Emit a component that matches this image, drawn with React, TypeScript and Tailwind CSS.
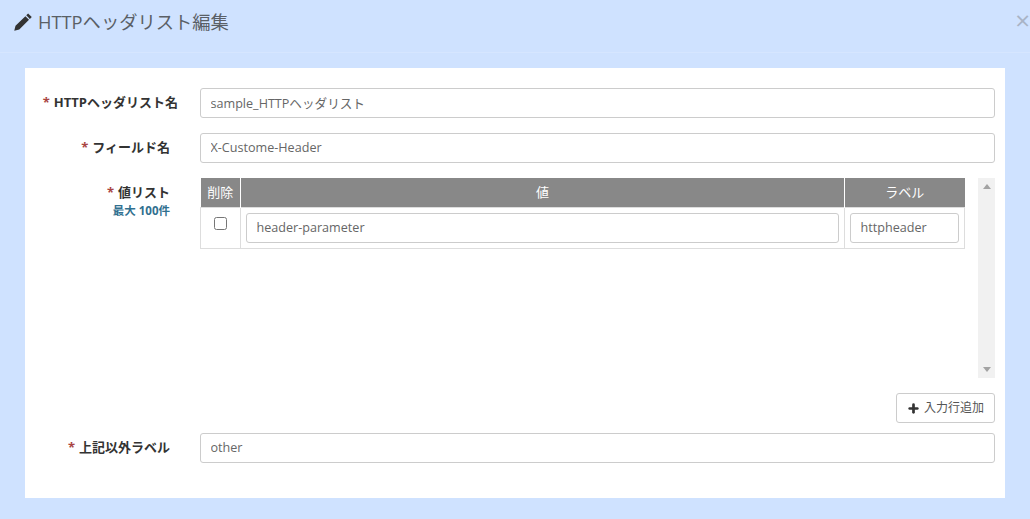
import { Plus } from "lucide-react";

const font = "font-['Open_Sans','Noto_Sans_CJK_JP',sans-serif]";

function FieldLabel({ children, className = "w-[145px]" }: { children: React.ReactNode; className?: string }) {
  return (
    <div className={`${className} shrink-0 pb-[2px] text-right text-[13px] leading-[18px] font-bold whitespace-nowrap text-[#333]`}>
      <span className="mr-[4px] text-[#a94442]">*</span>
      {children}
    </div>
  );
}

function TextBox({ value, className = "" }: { value: string; className?: string }) {
  return (
    <input
      readOnly
      value={value}
      className={`h-[30px] rounded-[3px] border border-[#ccc] bg-white pr-[10px] pl-[9.5px] text-[12.6px] text-[#666] outline-none ${className}`}
    />
  );
}

function App() {
  return (
    <div className={`${font} flex h-[519px] w-[1030px] flex-col overflow-hidden bg-[#cfe2ff]`}>
      <header className="flex h-[53px] shrink-0 items-start justify-between border-b border-[#d6e6ff] pt-[9px] pl-[13px]">
        <div className="flex items-center gap-[5px] text-[18.3px] leading-[25px] text-[#5a5f66]">
          <svg width="20" height="20" viewBox="0 0 16 16" className="fill-[#333]">
            <path d="M12.1 1.1 15 4l-1.5 1.5-2.9-2.9zM9.9 3.3l2.9 2.9L5 14l-4 1 1-4z" />
          </svg>
          <span>HTTPヘッダリスト編集</span>
        </div>
        <span className="text-[26px] leading-[22px] text-[#a9b4c6]">×</span>
      </header>

      <main className="mx-[25px] mt-[15px] flex h-[430px] flex-col bg-white pt-[20px] pr-[10px]">
        <div className="flex items-center gap-[22px]">
          <FieldLabel className="w-[153px]">HTTPヘッダリスト名</FieldLabel>
          <TextBox value="sample_HTTPヘッダリスト" className="flex-1 pb-[2px]" />
        </div>

        <div className="mt-[15px] flex items-center gap-[30px]">
          <FieldLabel>フィールド名</FieldLabel>
          <TextBox value="X-Custome-Header" className="flex-1 pb-[2px]" />
        </div>

        <div className="mt-[15px] flex gap-[30px]">
          <div className="w-[145px] shrink-0 text-right">
            <div className="pt-[5px]">
              <FieldLabel>値リスト</FieldLabel>
            </div>
            <div className="text-[11.5px] leading-[16px] font-bold text-[#31708f]">最大 100件</div>
          </div>

          <div className="flex h-[200px] flex-1 justify-between">
            <table className="h-fit w-[765px] table-fixed border-collapse text-[13px]">
              <thead>
                <tr className="h-[29px] bg-[#888] text-white">
                  <th className="w-[40px] border-r border-white font-normal">削除</th>
                  <th className="border-r border-white font-normal">値</th>
                  <th className="w-[120px] font-normal">ラベル</th>
                </tr>
              </thead>
              <tbody>
                <tr className="h-[41px]">
                  <td className="border border-[#ddd] text-center">
                    <input type="checkbox" className="h-[13px] w-[13px] align-[2px]" readOnly />
                  </td>
                  <td className="border border-[#ddd] px-[5px]">
                    <TextBox value="header-parameter" className="block w-full" />
                  </td>
                  <td className="border border-[#ddd] px-[5px]">
                    <TextBox value="httpheader" className="block w-full" />
                  </td>
                </tr>
              </tbody>
            </table>

            <div className="flex w-[17px] flex-col items-center justify-between bg-[#f1f1f1] py-[6px]">
              <div className="h-0 w-0 border-x-[4px] border-b-[5px] border-x-transparent border-b-[#a3a3a3]" />
              <div className="h-0 w-0 border-x-[4px] border-t-[5px] border-x-transparent border-t-[#a3a3a3]" />
            </div>
          </div>
        </div>

        <div className="mt-[15px] flex justify-end">
          <button className="flex h-[30px] items-center gap-[4px] rounded-[3px] border border-[#ccc] bg-white px-[10px] text-[12px] text-[#555]">
            <Plus size={13} strokeWidth={5} className="text-[#333]" />
            入力行追加
          </button>
        </div>

        <div className="mt-[10px] flex items-center gap-[30px]">
          <FieldLabel>上記以外ラベル</FieldLabel>
          <TextBox value="other" className="flex-1 pb-[2px]" />
        </div>
      </main>
    </div>
  );
}

export default App;
